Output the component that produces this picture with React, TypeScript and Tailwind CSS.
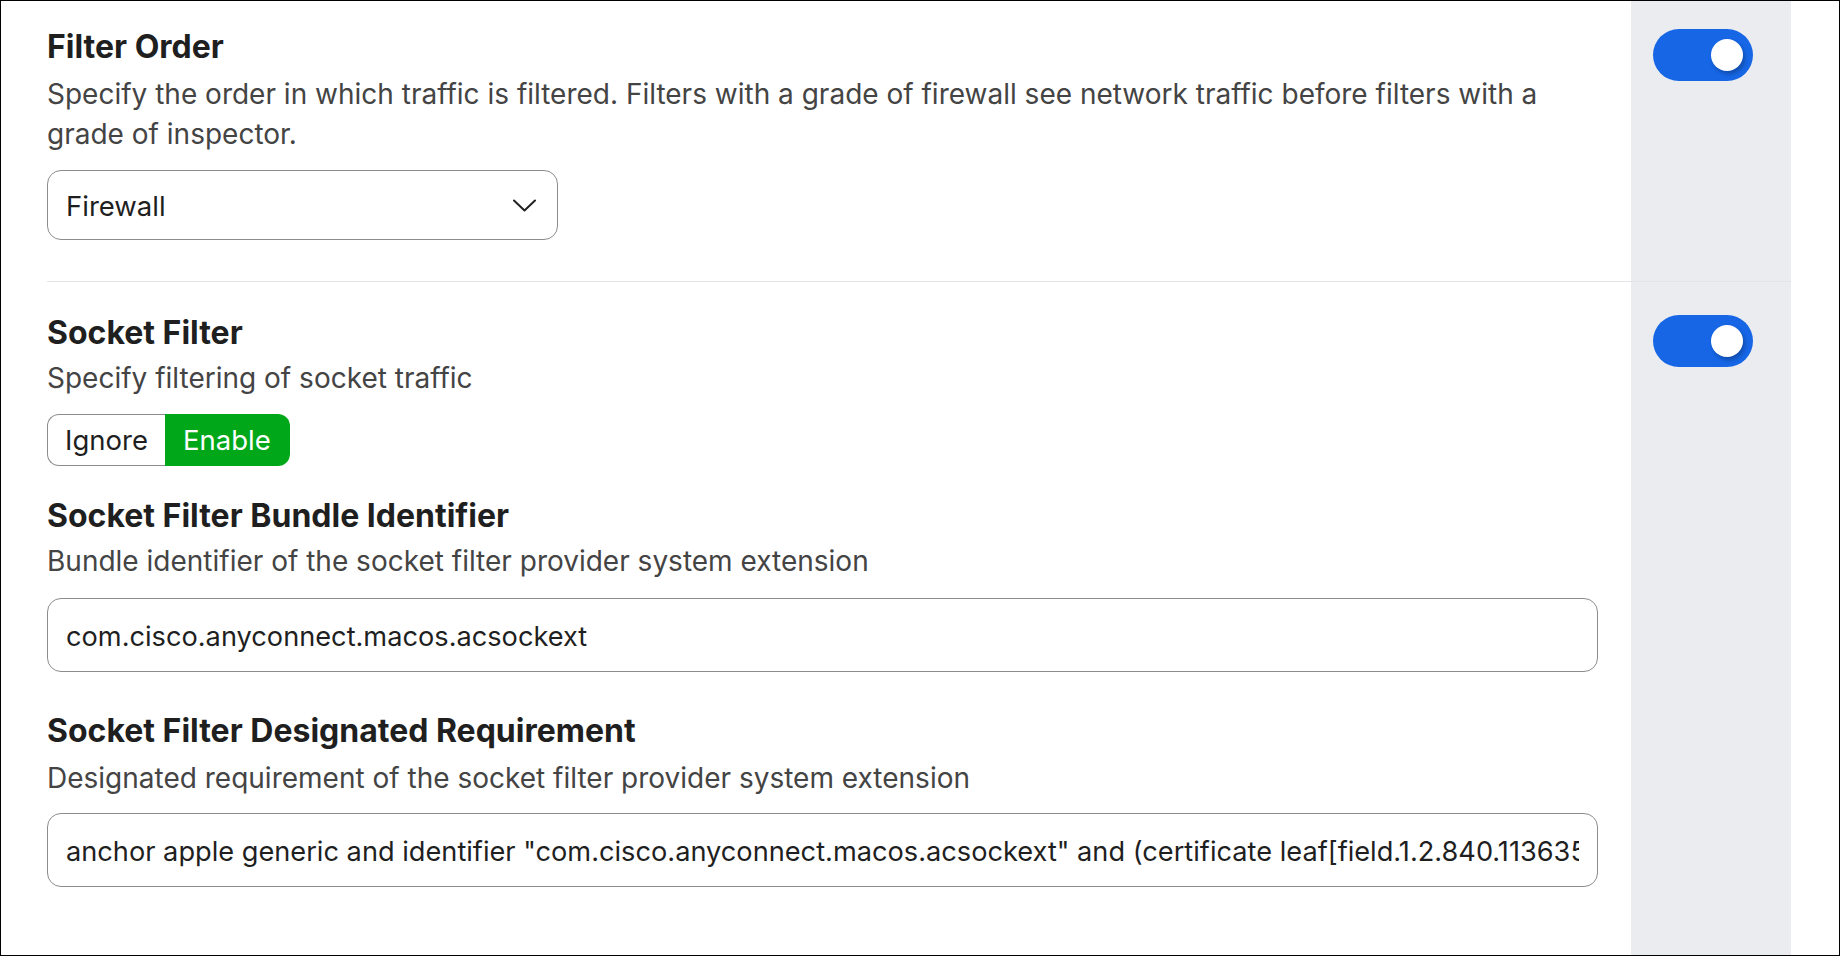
import React, { useState } from "react";

const REQUIREMENT =
  'anchor apple generic and identifier "com.cisco.anyconnect.macos.acsockext" and (certificate leaf[field.1.2.840.113635.100.6.1.9] /* exists */ or certificate 1[field.1.2.840.113635.100.6.2.6] /* exists */ and certificate leaf[field.1.2.840.113635.100.6.1.13] /* exists */ and certificate leaf[subject.OU] = DE8Y96K9QP)';

function Toggle({ on }: { on: boolean }) {
  return (
    <div
      className={`w-[100px] h-[52px] rounded-full flex items-center px-[10px] ${
        on ? "bg-[#1666e6] justify-end" : "bg-[#9aa0a6] justify-start"
      }`}
    >
      <div className="w-[32px] h-[32px] rounded-full bg-white shadow-[2px_3px_4px_rgba(0,0,0,0.25)]" />
    </div>
  );
}

function Heading({ children }: { children: React.ReactNode }) {
  return <h2 className="text-[32px] leading-[40px] font-bold text-[#1f1f1f]">{children}</h2>;
}

function Desc({ children }: { children: React.ReactNode }) {
  return <p className="max-w-[1551px] text-[28px] leading-[40px] text-[#444]">{children}</p>;
}

function TextBox({ value }: { value: string }) {
  return (
    <div className="w-[1551px] h-[74px] rounded-[14px] border-[1.5px] border-[#8c8c8c] px-[18px] flex items-center">
      <div className="overflow-hidden whitespace-nowrap pt-[4px] text-[27.2px] text-[#1f1f1f]">{value}</div>
    </div>
  );
}

export default function App() {
  const [socketMode, setSocketMode] = useState<"ignore" | "enable">("enable");

  return (
    <div
      className="w-[1840px] h-[956px] border border-black bg-white overflow-hidden pl-[46px]"
      style={{ fontFamily: "Inter, 'Noto Sans', sans-serif" }}
    >
      <div className="w-[1744px] h-full flex flex-col">
        {/* Filter Order */}
        <div className="flex border-b border-[#e3e4e8]">
          <div className="flex-1 pt-[26px] pb-[41px]">
            <Heading>Filter Order</Heading>
            <div className="mt-[7px]">
              <Desc>
                Specify the order in which traffic is filtered. Filters with a grade of firewall see network traffic
                before filters with a grade of inspector.
              </Desc>
            </div>
            <div className="mt-[16px] w-[511px] h-[70px] rounded-[14px] border-[1.5px] border-[#8c8c8c] pl-[18px] pr-[21px] flex items-center justify-between">
              <span className="pt-[4px] text-[27.5px] text-[#1f1f1f]">Firewall</span>
              <svg width="23" height="13" viewBox="0 0 23 13" fill="none">
                <path d="M1 1.5l10.5 10 10.5-10" stroke="#222" strokeWidth="2" strokeLinecap="round" strokeLinejoin="round" />
              </svg>
            </div>
          </div>
          <div className="w-[160px] bg-[#ebecf0] pl-[22px] pt-[28px]">
            <Toggle on />
          </div>
        </div>

        {/* Socket Filter */}
        <div className="flex flex-1">
          <div className="flex-1 pt-[31px]">
            <Heading>Socket Filter</Heading>
            <div className="mt-[5px]">
              <Desc>Specify filtering of socket traffic</Desc>
            </div>
            <div className="mt-[16px] flex h-[52px] text-[27.5px]">
              <button
                onClick={() => setSocketMode("ignore")}
                className={`rounded-l-[12px] pl-[17px] pr-[17px] pt-[2px] border-[1.5px] border-r-0 ${
                  socketMode === "ignore"
                    ? "bg-[#00a819] border-[#00a819] text-white"
                    : "bg-white border-[#8c8c8c] text-[#1f1f1f]"
                }`}
              >
                Ignore
              </button>
              <button
                onClick={() => setSocketMode("enable")}
                className={`rounded-r-[12px] pl-[18px] pr-[19px] pt-[2px] ${
                  socketMode === "enable"
                    ? "bg-[#00a819] text-white"
                    : "bg-white border-[1.5px] border-l-0 border-[#8c8c8c] text-[#1f1f1f]"
                }`}
              >
                Enable
              </button>
            </div>

            <div className="mt-[30px]">
              <Heading>Socket Filter Bundle Identifier</Heading>
            </div>
            <div className="mt-[5px]">
              <Desc>Bundle identifier of the socket filter provider system extension</Desc>
            </div>
            <div className="mt-[17px]">
              <TextBox value="com.cisco.anyconnect.macos.acsockext" />
            </div>

            <div className="mt-[39px]">
              <Heading>Socket Filter Designated Requirement</Heading>
            </div>
            <div className="mt-[7px]">
              <Desc>Designated requirement of the socket filter provider system extension</Desc>
            </div>
            <div className="mt-[15px]">
              <TextBox value={REQUIREMENT} />
            </div>
          </div>
          <div className="w-[160px] bg-[#ebecf0] pl-[22px] pt-[33px]">
            <Toggle on />
          </div>
        </div>
      </div>
    </div>
  );
}
